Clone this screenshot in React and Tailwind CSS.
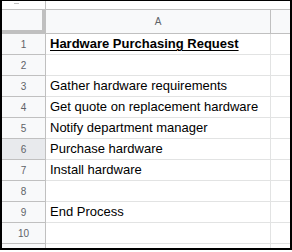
const rows = [
  { n: 1, text: 'Hardware Purchasing Request', title: true },
  { n: 2, text: '' },
  { n: 3, text: 'Gather hardware requirements' },
  { n: 4, text: 'Get quote on replacement hardware' },
  { n: 5, text: 'Notify department manager' },
  { n: 6, text: 'Purchase hardware', hover: true },
  { n: 7, text: 'Install hardware' },
  { n: 8, text: '' },
  { n: 9, text: 'End Process' },
  { n: 10, text: '' },
];

function Row({ n, text, title, hover }) {
  return (
    <div className="flex h-[21px]">
      <div
        className={`w-[44px] shrink-0 flex items-center justify-center border-r border-b border-[#c0c0c0] text-[10px] text-[#5f6368] ${
          hover ? 'bg-[#e8eaed]' : 'bg-[#f8f9fa]'
        }`}
      >
        {n}
      </div>
      <div className="flex-1 flex items-center pl-[4px] border-r border-b border-[#e2e3e3] text-[13px] text-black whitespace-nowrap overflow-hidden">
        {title ? <span className="font-bold underline underline-offset-2">{text}</span> : text}
      </div>
      <div className="w-[19px] shrink-0 border-b border-[#e2e3e3]" />
    </div>
  );
}

export default function App() {
  return (
    <div className="w-[292px] h-[252px] bg-white" style={{ fontFamily: '"Liberation Sans", Arial, sans-serif' }}>
      <div className="h-[250px] border-x-2 border-t border-b-2 border-black flex flex-col overflow-hidden">
        {/* strip above headers */}
        <div className="h-[9px] flex border-b border-[#c0c0c0]">
          <div className="w-[44px] shrink-0 border-r border-[#c0c0c0] pl-[12px]">
            <span className="block w-[5px] h-px bg-[#c0c0c0] mt-[2px]" />
          </div>
          <div className="flex-1" />
        </div>

        {/* column headers */}
        <div className="h-[24px] flex bg-[#f8f9fa]">
          <div className="w-[44px] shrink-0 border-r-4 border-b-4 border-[#c0c0c0]" />
          <div className="flex-1 flex items-center justify-center border-r border-b border-[#c0c0c0] text-[10px] text-[#5f6368]">
            A
          </div>
          <div className="w-[19px] shrink-0 border-b border-[#c0c0c0]" />
        </div>

        {rows.map((r) => (
          <Row key={r.n} {...r} />
        ))}

        {/* partial row */}
        <div className="flex flex-1">
          <div className="w-[44px] shrink-0 bg-[#f8f9fa] border-r border-[#c0c0c0]" />
          <div className="flex-1 border-r border-[#e2e3e3]" />
          <div className="w-[19px] shrink-0" />
        </div>
      </div>
    </div>
  );
}
